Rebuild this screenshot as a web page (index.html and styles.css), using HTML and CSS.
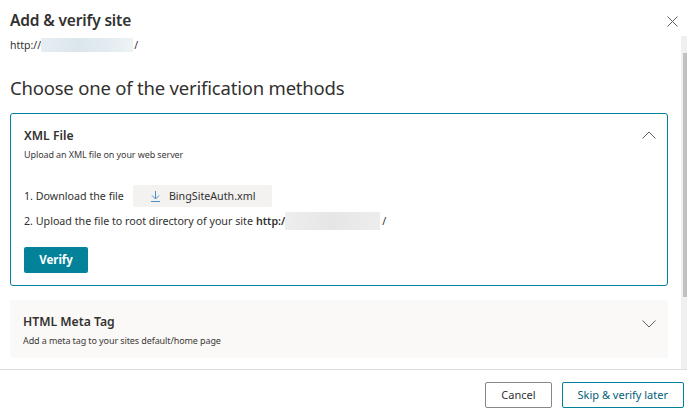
FILE: index.html
```html
<!DOCTYPE html>
<html>
<head>
    <meta charset="utf-8" />
    <title>Add &amp; verify site</title>
    <link rel="stylesheet" href="styles.css">
</head>
<body>
<div class="dialog">
    <div class="dlg_head">
        <h1>Add &amp; verify site</h1>
        <a href="javascript:;" class="close">
            <svg width="11" height="11" viewBox="0 0 11 11"><path d="M0.5 0.5L10.5 10.5M10.5 0.5L0.5 10.5" stroke="#605e5c" stroke-width="1" fill="none"/></svg>
        </a>
    </div>
    <div class="dlg_body">
        <div class="scroll">
            <div class="url">http://<span class="blur"></span>/</div>
            <h2>Choose one of the verification methods</h2>

            <div class="card open">
                <div class="card_head">
                    <div>
                        <h3>XML File</h3>
                        <p>Upload an XML file on your web server</p>
                    </div>
                    <svg class="chev" width="14" height="8" viewBox="0 0 14 8"><path d="M0.5 7.5L7 1L13.5 7.5" stroke="#605e5c" fill="none"/></svg>
                </div>
                <div class="steps">
                    <div class="step">1. Download the file
                        <a href="javascript:;" class="dl">
                            <svg width="9" height="11" viewBox="0 0 9 11"><path d="M4.5 0V8M1 4.5L4.5 8L8 4.5M0 10.5H9" stroke="#4f8fc8" fill="none"/></svg>
                            BingSiteAuth.xml
                        </a>
                    </div>
                    <div class="step">2. Upload the file to root directory of your site <b>http:/</b><span class="blur gray"></span>/</div>
                </div>
                <a href="javascript:;" class="btn_primary">Verify</a>
            </div>

            <div class="card">
                <div class="card_head">
                    <div>
                        <h3>HTML Meta Tag</h3>
                        <p>Add a meta tag to your sites default/home page</p>
                    </div>
                    <svg class="chev down" width="14" height="8" viewBox="0 0 14 8"><path d="M0.5 0.5L7 7L13.5 0.5" stroke="#605e5c" fill="none"/></svg>
                </div>
            </div>
        </div>
        <div class="scrollbar">
            <div class="thumb"></div>
        </div>
    </div>
    <div class="dlg_foot">
        <a href="javascript:;" class="btn">Cancel</a>
        <a href="javascript:;" class="btn btn_teal">Skip &amp; verify later</a>
    </div>
</div>
</body>
</html>
```

FILE: styles.css
```css
*{margin:0;padding:0;box-sizing:border-box;}
html,body{width:687px;height:420px;overflow:hidden;background:#fff;}
body{font-family:"Noto Sans","Open Sans",sans-serif;color:#323130;}
a{text-decoration:none;color:inherit;}

.dialog{display:flex;flex-direction:column;height:420px;width:687px;}

.dlg_head{
    height:36px;
    display:flex;
    align-items:center;
    justify-content:space-between;
    padding:4px 10px 0 10px;
}
.dlg_head h1{font-size:15.5px;font-weight:600;letter-spacing:-0.15px;}
.close{display:flex;margin-top:2px;margin-right:-1px;}

.dlg_body{display:flex;height:334px;border-bottom:1px solid #dddddd;}
.scroll{flex:1;padding:0 13px 0 10px;overflow:hidden;}

.url{font-size:10.5px;color:#323130;display:flex;align-items:center;height:17px;}
.blur{
    display:inline-block;
    width:92px;
    height:14px;
    background:linear-gradient(90deg,#e6eef3,#dbe6ec 40%,#e2ebf0 70%,#eef3f6);
    margin-right:1px;
}
.blur.gray{width:95px;height:18px;background:linear-gradient(90deg,#eeeeee,#e6e6e6 50%,#ededed);margin:0 2px 0 0;}

h2{font-size:18.5px;font-weight:400;letter-spacing:-0.2px;margin:22px 0 12px;line-height:26px;}

.card{
    border-radius:4px;
    background:#faf9f8;
    padding:13px 12px 11px 13px;
    margin-bottom:14px;
}
.card.open{
    background:#fff;
    border:1px solid #00809b;
    border-radius:3px;
    padding:13px 11px 12px 13px;
}
.card_head{display:flex;justify-content:space-between;align-items:flex-start;}
.card_head h3{font-size:12.2px;font-weight:600;line-height:17px;}
.card_head p{font-size:9px;letter-spacing:-0.1px;color:#3b3a39;margin-top:4px;}
.chev{margin-top:4px;}
.chev.down{margin-top:7px;}

.steps{margin-top:24px;font-size:10.7px;}
.step{display:flex;align-items:center;height:22px;margin-bottom:3px;}
.step b{font-weight:600;margin-left:3px;}
.dl{
    display:flex;
    align-items:center;
    gap:9px;
    background:#f3f2f1;
    height:22px;
    padding:0 17px 0 18px;
    margin-left:9px;
    border-radius:2px;
}
.btn_primary{
    display:block;
    margin-top:15px;
    background:#03829a;
    color:#fff;
    font-size:11.5px;
    font-weight:700;
    width:64px;
    height:26px;
    line-height:26px;
    text-align:center;
    border-radius:2px;
}

.scrollbar{width:6px;background:#f0f0f0;padding:17px 0 0 2px;}
.thumb{height:244px;background:#c1c1c1;}

.dlg_foot{
    display:flex;
    justify-content:flex-end;
    gap:10px;
    padding:12px 3px 0 0;
}
.btn{
    height:26px;
    line-height:24px;
    border:1px solid #8a8886;
    border-radius:2px;
    font-size:11px;
    padding:0 15px;
    color:#323130;
}
.btn_teal{border-color:#00809b;color:#005e7a;padding:0 15px;}
```
